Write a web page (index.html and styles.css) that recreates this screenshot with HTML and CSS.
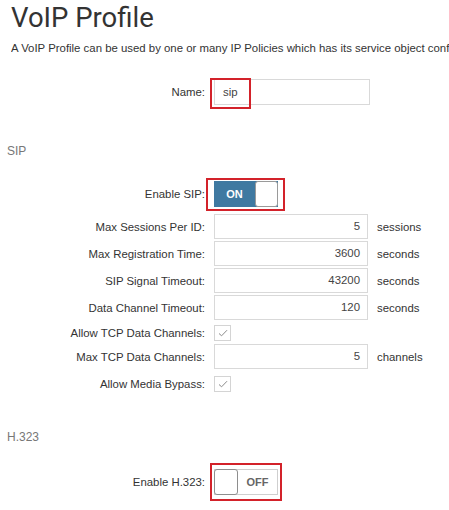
FILE: index.html
```html
<!DOCTYPE html>
<html>
<head>
<meta charset="utf-8">
<link rel="stylesheet" href="styles.css">
</head>
<body>
<div class="page">
  <h1 class="title">VoIP Profile</h1>
  <p class="desc">A VoIP Profile can be used by one or many IP Policies which has its service object configured for VoIP traffic.</p>

  <div class="row row-name">
    <div class="label">Name:</div>
    <div class="field">
      <div class="textbox textbox-name">sip</div>
      <span class="mark mark-name"></span>
    </div>
  </div>

  <div class="section">SIP</div>

  <div class="row row-toggle">
    <div class="label">Enable SIP:</div>
    <div class="field">
      <div class="toggle toggle-on"><span class="toggle-text">ON</span><span class="knob"></span></div>
      <span class="mark mark-sip"></span>
    </div>
  </div>

  <div class="row row-input">
    <div class="label">Max Sessions Per ID:</div>
    <div class="field"><div class="textbox num">5</div><span class="unit">sessions</span></div>
  </div>
  <div class="row row-input">
    <div class="label">Max Registration Time:</div>
    <div class="field"><div class="textbox num">3600</div><span class="unit">seconds</span></div>
  </div>
  <div class="row row-input">
    <div class="label">SIP Signal Timeout:</div>
    <div class="field"><div class="textbox num">43200</div><span class="unit">seconds</span></div>
  </div>
  <div class="row row-input">
    <div class="label">Data Channel Timeout:</div>
    <div class="field"><div class="textbox num">120</div><span class="unit">seconds</span></div>
  </div>
  <div class="row row-check">
    <div class="label">Allow TCP Data Channels:</div>
    <div class="field"><div class="checkbox"><svg width="10" height="8" viewBox="0 0 10 8"><path d="M1 4.5 L3.6 6.8 L9 1.2" fill="none" stroke="#8a8a8a" stroke-width="1"/></svg></div></div>
  </div>
  <div class="row row-input">
    <div class="label">Max TCP Data Channels:</div>
    <div class="field"><div class="textbox num">5</div><span class="unit">channels</span></div>
  </div>
  <div class="row row-check row-check-last">
    <div class="label">Allow Media Bypass:</div>
    <div class="field"><div class="checkbox"><svg width="10" height="8" viewBox="0 0 10 8"><path d="M1 4.5 L3.6 6.8 L9 1.2" fill="none" stroke="#8a8a8a" stroke-width="1"/></svg></div></div>
  </div>

  <div class="section section-h323">H.323</div>

  <div class="row row-toggle row-toggle-h323">
    <div class="label">Enable H.323:</div>
    <div class="field">
      <div class="toggle toggle-off"><span class="knob"></span><span class="toggle-text">OFF</span></div>
      <span class="mark mark-h323"></span>
    </div>
  </div>
</div>
</body>
</html>
```
FILE: styles.css
```css
html, body {
  margin: 0;
  padding: 0;
  background: #ffffff;
}
body {
  width: 449px;
  height: 510px;
  overflow: hidden;
  font-family: "Liberation Sans", Arial, sans-serif;
  font-size: 11.4px;
  color: #333333;
}
.page {
  padding: 0 0 0 11px;
}
.title {
  margin: 0;
  padding-top: 2px;
  font-family: Roboto, "Liberation Sans", sans-serif;
  font-weight: 400;
  font-size: 27.5px;
  line-height: 32px;
  color: #333333;
}
.desc {
  margin: 7px 0 0 0;
  width: 438px;
  overflow: hidden;
  white-space: nowrap;
  font-size: 11.4px;
  line-height: 14px;
  color: #333333;
}
.row {
  display: flex;
  align-items: center;
}
.label {
  width: 194px;
  flex: none;
  text-align: right;
  margin-right: 9px;
  color: #333333;
  white-space: nowrap;
}
.field {
  position: relative;
  display: flex;
  align-items: center;
}
.row-name {
  margin-top: 24px;
  height: 26px;
}
.textbox {
  box-sizing: border-box;
  height: 25px;
  border: 1px solid #d9d9d9;
  background: #ffffff;
  line-height: 23px;
  color: #444444;
  padding: 0 7px;
}
.textbox-name {
  width: 156px;
  height: 26px;
  line-height: 24px;
  padding-left: 8px;
}
.num {
  width: 154px;
  text-align: right;
}
.unit {
  margin-left: 9px;
  color: #333333;
}
.section {
  margin: 39px 0 0 -4px;
  font-size: 12px;
  line-height: 14px;
  color: #777777;
}
.row-toggle {
  margin-top: 23px;
  height: 26px;
}
.row-input {
  margin-top: 2px;
  height: 25px;
}
.row-toggle + .row-input {
  margin-top: 7px;
}
.row-check {
  height: 16px;
  margin-top: 5px;
  margin-bottom: 3px;
}
.row-check-last {
  margin-top: 7px;
}
.checkbox {
  box-sizing: border-box;
  width: 17px;
  height: 16px;
  border: 1px solid #d4d4d4;
  display: flex;
  align-items: center;
  justify-content: center;
}
.toggle {
  box-sizing: border-box;
  position: relative;
  width: 64px;
  height: 26px;
  display: flex;
  align-items: center;
  font-weight: bold;
  font-size: 11px;
}
.toggle-on {
  background: #3f79a1;
  color: #ffffff;
}
.toggle-on .toggle-text {
  width: 41px;
  text-align: center;
}
.toggle-on .knob {
  box-sizing: border-box;
  width: 23px;
  height: 26px;
  background: #ffffff;
  border: 1px solid #9a9a9a;
  border-radius: 3px;
}
.toggle-off {
  background: #ffffff;
  border: 1px solid #cfcfcf;
  color: #666666;
}
.toggle-off .knob {
  box-sizing: border-box;
  width: 24px;
  height: 26px;
  margin: -1px 0 0 -1px;
  background: #ffffff;
  border: 1px solid #8e8e8e;
  border-radius: 3px;
}
.toggle-off .toggle-text {
  flex: 1;
  text-align: center;
  font-size: 11px;
}
.section-h323 {
  margin-top: 38px;
}
.row-toggle-h323 {
  margin-top: 25px;
}
.mark {
  position: absolute;
  box-sizing: border-box;
  border: 2px solid #d3222a;
}
.mark-name {
  left: -4px;
  top: -1px;
  width: 41px;
  height: 31px;
}
.mark-sip {
  left: -8px;
  top: -3px;
  width: 79px;
  height: 33px;
}
.mark-h323 {
  left: -4px;
  top: -6px;
  width: 72px;
  height: 38px;
}
```
